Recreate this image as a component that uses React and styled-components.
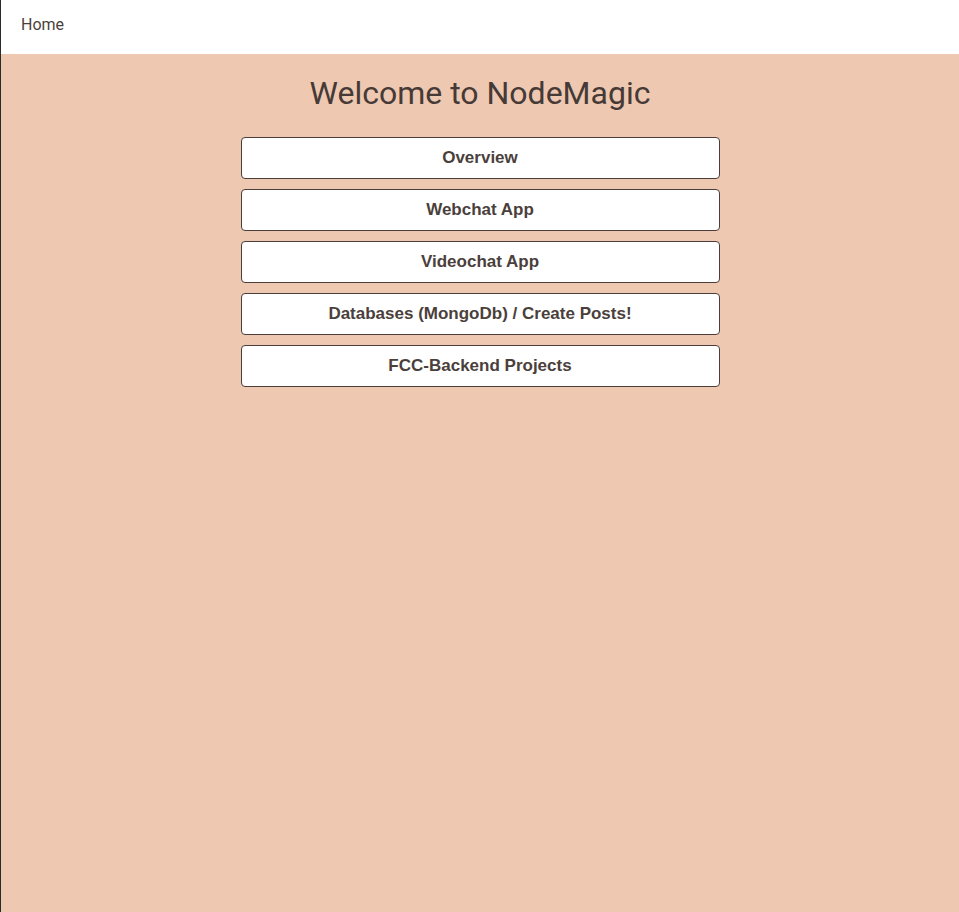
import styled, { createGlobalStyle } from "styled-components";

const GlobalStyle = createGlobalStyle`
  html, body {
    margin: 0;
    padding: 0;
    height: 100%;
  }

  body {
    font-family: Roboto, "Liberation Sans", sans-serif;
    color: #4b3f3c;
  }

  #root {
    min-height: 100%;
  }
`;

const Page = styled.div`
  min-height: 912px;
  display: flex;
  flex-direction: column;
  border-left: 1px solid #2b2b2e;
  background-color: #eec8b1;
`;

const TopBar = styled.nav`
  height: 54px;
  background-color: #ffffff;
  display: flex;
  align-items: center;
  padding: 0 20px;
`;

const NavLink = styled.a`
  font-family: Roboto, "Liberation Sans", sans-serif;
  font-size: 16px;
  color: #4b3f3c;
  text-decoration: none;
  cursor: pointer;
  margin-top: -6px;
`;

const Main = styled.main`
  display: flex;
  flex-direction: column;
  align-items: center;
  padding-top: 19px;
`;

const Title = styled.h1`
  font-family: Roboto, "Liberation Sans", sans-serif;
  font-size: 32px;
  font-weight: 400;
  margin: 0 0 24px;
  line-height: 40px;
  color: #463a37;
`;

const Menu = styled.div`
  width: 50%;
  display: flex;
  flex-direction: column;
  gap: 10px;
`;

const MenuButton = styled.button`
  height: 42px;
  width: 100%;
  background-color: #ffffff;
  border: 1px solid #4b3f3c;
  border-radius: 4px;
  font-family: "Liberation Sans", Arial, sans-serif;
  font-size: 17px;
  font-weight: bold;
  color: #4b3f3c;
  cursor: pointer;

  &:hover {
    background-color: #f8efe9;
  }
`;

const items = [
  "Overview",
  "Webchat App",
  "Videochat App",
  "Databases (MongoDb) / Create Posts!",
  "FCC-Backend Projects",
];

export default function App() {
  return (
    <>
      <GlobalStyle />
      <Page>
        <TopBar>
          <NavLink>Home</NavLink>
        </TopBar>
        <Main>
          <Title>Welcome to NodeMagic</Title>
          <Menu>
            {items.map((label) => (
              <MenuButton key={label} type="button">
                {label}
              </MenuButton>
            ))}
          </Menu>
        </Main>
      </Page>
    </>
  );
}
